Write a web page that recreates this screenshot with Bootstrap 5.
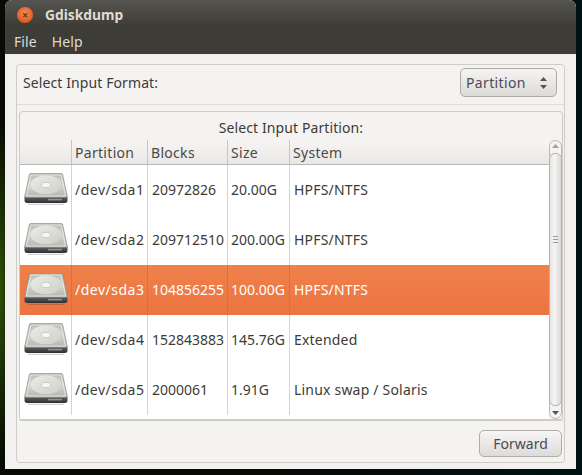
<!DOCTYPE html>
<html lang="en">
<head>
<meta charset="utf-8">
<title>Gdiskdump</title>
<link rel="stylesheet" href="https://cdn.jsdelivr.net/npm/bootstrap@5.3.0/dist/css/bootstrap.min.css">
<style>
html,body{height:475px;overflow:hidden}
body{background:radial-gradient(ellipse 14px 170px at 0 290px,#2f5208,rgba(20,40,5,0) 100%),linear-gradient(90deg,#070b03 0,#060806 50%,#001214 100%);font-family:"Noto Sans","Open Sans",sans-serif;font-size:14px;color:#3c3b37;padding:0 6px 6px 5px}
.gd-win{height:469px;width:571px;background:#f2f1f0;border-radius:7px 7px 0 0;overflow:hidden}
.gd-title{height:28px;background:linear-gradient(180deg,#56544e,#3d3b36);color:#dfdbd2;font-weight:700;font-size:13.8px;padding:2px 0 0 12px;gap:12px}
.gd-close{width:16px;height:16px;border-radius:50%;background:radial-gradient(circle at 50% 40%,#f58a55,#d9490f);color:#6e2a08;font-size:10px;line-height:16px;text-align:center}
.gd-menu{height:26px;background:#3e3c37;color:#dfdbd2;padding-left:9px;gap:15px;font-size:14px;letter-spacing:.1px}
.gd-body{height:415px;padding:10px 11px 6px 11px}
.gd-outer{height:100%;border:1px solid #cfcdca;border-radius:4px;background:#f4f3f2}
.gd-format{height:39px;padding:0 7px 4px 6px;letter-spacing:.1px}
.gd-select{width:97px;height:29px;border:1px solid #afaca7;border-radius:5px;background:linear-gradient(180deg,#f5f4f3,#dddbd8);color:#4c4c55;padding:0 8px 0 5px;font-size:14px;letter-spacing:.35px}
.gd-arrows{width:9px}
.gd-sep{border-top:1px solid #dedcda;margin:0 0 6px}
.gd-frame{margin:0 1px 0 2px;height:310px;border:1px solid #cdcbc8;border-radius:4px 4px 3px 3px;background:#f4f3f2;border-bottom-width:2px}
.gd-cap{height:28px;text-align:center;padding-top:5px;font-size:14px;letter-spacing:.1px}
.gd-grid{flex:1;min-height:0}
.gd-cols{flex:1;min-width:0;background:#fff}
.gd-row{height:50px;align-items:center;font-size:14px;color:#3c3b37}
.gd-head{height:25px;background:linear-gradient(180deg,#f6f5f4,#e9e8e6);border-bottom:1px solid #b9b7b3;font-size:14px;letter-spacing:.3px;color:#4a4944;align-items:center}
.gd-sel{background:linear-gradient(180deg,#f0804a,#ec7542);color:#fff}
.gd-c{height:100%;display:flex;align-items:center;padding-left:3px;border-right:1px solid #d5d3d0;white-space:nowrap}
.gd-row .gd-c{padding-bottom:2px}
.gd-sel .gd-c{border-right-color:#e8693a}
.gd-head .gd-c{border-right-color:#c8c6c2}
.gd-c1{width:52px;justify-content:center;padding-left:0}
.gd-c2{width:76px}
.gd-row .gd-c2{letter-spacing:.5px}
.gd-c3{width:80px}
.gd-row .gd-c3{padding-left:4px}
.gd-c4{width:62px}
.gd-c5{flex:1;border-right:0}
.gd-row .gd-c5{padding-left:4px;letter-spacing:.2px}
.gd-scroll{width:13px;background:#f3f2f1}
.gd-step{height:17px;color:#8a8985;border:1px solid #bbb9b5;background:#f4f3f2}
.gd-step-up{border-radius:7px 7px 0 0;margin-bottom:-4px;padding-bottom:5px}
.gd-step-dn{border-radius:0 0 7px 7px;margin-top:-4px;padding-top:5px}
.gd-thumb{flex:1;position:relative;background:linear-gradient(90deg,#e4e3e1,#f6f5f4 40%,#dad8d5);border:1px solid #b5b3af;border-radius:6px;gap:2px;padding-top:82px}
.gd-thumb i{display:block;width:5px;height:1px;background:#9c9a96}
.gd-foot{padding:9px 2px 0 0}
.gd-btn{width:83px;height:27px;border:1px solid #b0ada8;border-radius:5px;background:linear-gradient(180deg,#f7f6f5,#dddbd8);color:#4c4a50;font-size:14px;padding:0;line-height:1}
</style>
</head>
<body>
<div class="gd-win d-flex flex-column">
  <div class="gd-title d-flex align-items-center"><span class="gd-close">×</span><span>Gdiskdump</span></div>
  <div class="gd-menu d-flex align-items-center"><span>File</span><span>Help</span></div>
  <div class="gd-body">
    <div class="gd-outer d-flex flex-column">
      <div class="gd-format d-flex align-items-center justify-content-between">
        <span>Select Input Format:</span>
        <div class="gd-select d-flex align-items-center justify-content-between"><span>Partition</span>
          <svg class="gd-arrows" viewBox="0 0 9 14" height="14"><path d="M4.500 1 8 5H1zM4.500 13 1 9h7z" fill="#55544f"/></svg>
        </div>
      </div>
      <div class="gd-sep"></div>
      <div class="gd-frame d-flex flex-column">
        <div class="gd-cap">Select Input Partition:</div>
        <div class="gd-grid d-flex">
          <div class="gd-cols">
            <div class="gd-head d-flex"><div class="gd-c gd-c1"></div><div class="gd-c gd-c2">Partition</div><div class="gd-c gd-c3">Blocks</div><div class="gd-c gd-c4">Size</div><div class="gd-c gd-c5">System</div></div>
            <div class="gd-row d-flex"><div class="gd-c gd-c1"><svg width="44" height="32" viewBox="0 0 44 32"><use href="#hd"/></svg></div><div class="gd-c gd-c2">/dev/sda1</div><div class="gd-c gd-c3">20972826</div><div class="gd-c gd-c4">20.00G</div><div class="gd-c gd-c5">HPFS/NTFS</div></div>
            <div class="gd-row d-flex"><div class="gd-c gd-c1"><svg width="44" height="32" viewBox="0 0 44 32"><use href="#hd"/></svg></div><div class="gd-c gd-c2">/dev/sda2</div><div class="gd-c gd-c3">209712510</div><div class="gd-c gd-c4">200.00G</div><div class="gd-c gd-c5">HPFS/NTFS</div></div>
            <div class="gd-row gd-sel d-flex"><div class="gd-c gd-c1"><svg width="44" height="32" viewBox="0 0 44 32"><use href="#hd"/></svg></div><div class="gd-c gd-c2">/dev/sda3</div><div class="gd-c gd-c3">104856255</div><div class="gd-c gd-c4">100.00G</div><div class="gd-c gd-c5">HPFS/NTFS</div></div>
            <div class="gd-row d-flex"><div class="gd-c gd-c1"><svg width="44" height="32" viewBox="0 0 44 32"><use href="#hd"/></svg></div><div class="gd-c gd-c2">/dev/sda4</div><div class="gd-c gd-c3">152843883</div><div class="gd-c gd-c4">145.76G</div><div class="gd-c gd-c5">Extended</div></div>
            <div class="gd-row d-flex"><div class="gd-c gd-c1"><svg width="44" height="32" viewBox="0 0 44 32"><use href="#hd"/></svg></div><div class="gd-c gd-c2">/dev/sda5</div><div class="gd-c gd-c3">2000061</div><div class="gd-c gd-c4">1.91G</div><div class="gd-c gd-c5">Linux swap / Solaris</div></div>
          </div>
          <div class="gd-scroll d-flex flex-column">
            <div class="gd-step gd-step-up d-flex justify-content-center align-items-center"><svg width="7" height="4" viewBox="0 0 7 4"><path d="M3.500 0 7 4H0z" fill="#a3a19d"/></svg></div>
            <div class="gd-thumb d-flex flex-column align-items-center"><i></i><i></i><i></i></div>
            <div class="gd-step gd-step-dn d-flex justify-content-center align-items-center"><svg width="7" height="4" viewBox="0 0 7 4"><path d="M3.500 4 0 0h7z" fill="#55544f"/></svg></div>
          </div>
        </div>
      </div>
      <div class="gd-foot d-flex justify-content-end"><button type="button" class="btn gd-btn">Forward</button></div>
    </div>
  </div>
</div>
<svg width="0" height="0" class="position-absolute"><defs>
<linearGradient id="hdt" x1="0" y1="0" x2="0" y2="1"><stop offset="0" stop-color="#bdbdb8"/><stop offset=".5" stop-color="#d4d4cf"/><stop offset="1" stop-color="#b4b4af"/></linearGradient>
<linearGradient id="hdd" x1="0" y1="0" x2="1" y2="1"><stop offset="0" stop-color="#ececE8"/><stop offset="1" stop-color="#cfcfca"/></linearGradient>
<linearGradient id="hdb" x1="0" y1="0" x2="0" y2="1"><stop offset="0" stop-color="#5a5d5f"/><stop offset="1" stop-color="#2c2e30"/></linearGradient>
<g id="hd">
<path d="M5.500 1.200Q5.800 .6 6.500 .6H37.500Q38.200 .6 38.500 1.200L43.500 24.500H.5z" fill="url(#hdt)" stroke="#8b8b84" stroke-width=".7"/>
<path d="M6.800 2H37.200L41.500 23H2.500z" fill="none" stroke="#f2f2ef" stroke-width=".7"/>
<ellipse cx="22" cy="11.800" rx="15.500" ry="9.500" fill="url(#hdd)"/>
<ellipse cx="22" cy="12" rx="4.500" ry="2.600" fill="#f6f6f3" stroke="#b0b0ab" stroke-width=".5"/>
<path d="M.5 24.500H43.500V27.500Q43.500 30 40.500 30H3.500Q.5 30 .5 27.500z" fill="url(#hdb)"/>
<rect x="24" y="25.800" width="14" height="1.600" fill="#8f9191"/>
<path d="M4 31.300H40" stroke="#000" stroke-opacity=".22"/>
</g></defs></svg>
<script src="https://cdn.jsdelivr.net/npm/bootstrap@5.3.0/dist/js/bootstrap.bundle.min.js"></script>
</body>
</html>
